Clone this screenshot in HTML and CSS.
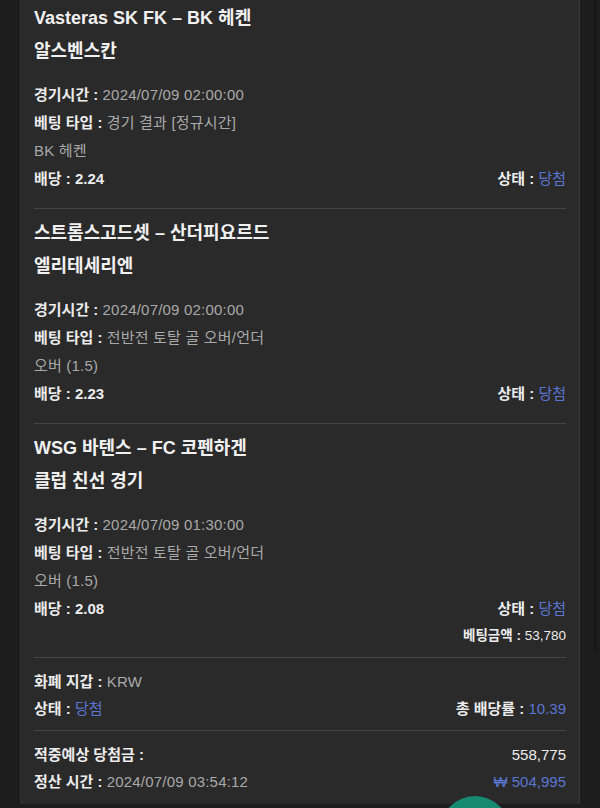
FILE: index.html
```html
<!DOCTYPE html>
<html lang="ko">
<head>
<meta charset="utf-8">
<title>베팅 내역</title>
<link rel="stylesheet" href="styles.css">
</head>
<body>
<div class="screen">
  <div class="panel">
    <section class="match">
      <div class="title">Vasteras SK FK – BK 헤켄</div>
      <div class="league">알스벤스칸</div>
      <div class="rows">
        <div class="row"><span class="label">경기시간 :</span> <span class="value">2024/07/09 02:00:00</span></div>
        <div class="row"><span class="label">베팅 타입 :</span> <span class="value">경기 결과 [정규시간]</span></div>
        <div class="row"><span class="value">BK 헤켄</span></div>
        <div class="row split">
          <span><span class="label">배당 :</span> <span class="label">2.24</span></span>
          <span><span class="label">상태 :</span> <span class="win">당첨</span></span>
        </div>
      </div>
    </section>
    <section class="match">
      <div class="title">스트롬스고드셋 – 산더피요르드</div>
      <div class="league">엘리테세리엔</div>
      <div class="rows">
        <div class="row"><span class="label">경기시간 :</span> <span class="value">2024/07/09 02:00:00</span></div>
        <div class="row"><span class="label">베팅 타입 :</span> <span class="value">전반전 토탈 골 오버/언더</span></div>
        <div class="row"><span class="value">오버 (1.5)</span></div>
        <div class="row split">
          <span><span class="label">배당 :</span> <span class="label">2.23</span></span>
          <span><span class="label">상태 :</span> <span class="win">당첨</span></span>
        </div>
      </div>
    </section>
    <section class="match match-amount">
      <div class="title">WSG 바텐스 – FC 코펜하겐</div>
      <div class="league">클럽 친선 경기</div>
      <div class="rows">
        <div class="row"><span class="label">경기시간 :</span> <span class="value">2024/07/09 01:30:00</span></div>
        <div class="row"><span class="label">베팅 타입 :</span> <span class="value">전반전 토탈 골 오버/언더</span></div>
        <div class="row"><span class="value">오버 (1.5)</span></div>
        <div class="row split">
          <span><span class="label">배당 :</span> <span class="label">2.08</span></span>
          <span><span class="label">상태 :</span> <span class="win">당첨</span></span>
        </div>
        <div class="row amount"><span class="label">베팅금액 :</span> <span class="plain">53,780</span></div>
      </div>
    </section>
    <section class="summary">
      <div class="row"><span class="label">화폐 지갑 :</span> <span class="value">KRW</span></div>
      <div class="row split">
        <span><span class="label">상태 :</span> <span class="win">당첨</span></span>
        <span><span class="label">총 배당률 :</span> <span class="win">10.39</span></span>
      </div>
    </section>
    <section class="summary summary-last">
      <div class="row split">
        <span class="label">적중예상 당첨금 :</span>
        <span class="plain">558,775</span>
      </div>
      <div class="row split">
        <span><span class="label">정산 시간 :</span> <span class="value">2024/07/09 03:54:12</span></span>
        <span class="win">₩ 504,995</span>
      </div>
    </section>
  </div>
  <div class="scroll-thumb"></div>
  <div class="fab"></div>
</div>
</body>
</html>
```

FILE: styles.css
```css
html, body {
  margin: 0;
  padding: 0;
  height: 808px;
  overflow: hidden;
  background: #1d1d1d;
}

.screen {
  position: relative;
  height: 808px;
  overflow: hidden;
  padding: 0 20px;
  font-family: "Liberation Sans", "Noto Sans CJK KR", sans-serif;
  color: #ececec;
}

.panel {
  box-sizing: border-box;
  width: 560px;
  padding: 0 13px;
  background: #2a2a2a;
  border-left: 1px solid #303030;
  border-right: 1px solid #383838;
}

.match {
  border-top: 1px solid #454545;
  padding: 8px 0 15px;
}

.match:first-child {
  border-top: none;
  padding-top: 2px;
}

.title,
.league {
  font-size: 18px;
  line-height: 33px;
  font-weight: 700;
  color: #f1f1f1;
  white-space: nowrap;
}

.rows {
  margin-top: 13px;
}

.row {
  font-size: 15px;
  line-height: 28px;
  white-space: nowrap;
}

.split {
  display: flex;
  justify-content: space-between;
}

.label {
  font-weight: 700;
  color: #ececec;
}

.value {
  color: #a9a9a9;
  letter-spacing: 0.2px;
}

.plain {
  color: #ececec;
}

.win {
  color: #5a76d3;
}

.match-amount {
  padding-bottom: 8px;
}

.amount {
  font-size: 13.5px;
  line-height: 26px;
  text-align: right;
}

.summary {
  border-top: 1px solid #454545;
  padding: 10px 0 8px;
}

.summary .row {
  line-height: 27px;
}

.summary-last {
  padding-bottom: 9px;
}

.scroll-thumb {
  position: absolute;
  left: 593px;
  top: 0;
  width: 4px;
  height: 653px;
  background: #181818;
  border-radius: 2px;
}

.fab {
  position: absolute;
  left: 440px;
  top: 796px;
  width: 70px;
  height: 70px;
  border-radius: 50%;
  background: #168b72;
}
```
